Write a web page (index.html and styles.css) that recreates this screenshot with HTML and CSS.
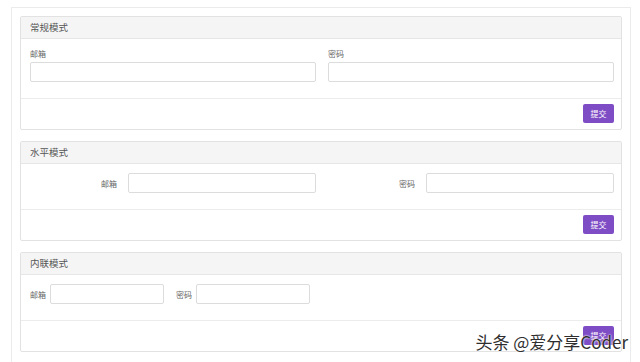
FILE: index.html
```html
<!DOCTYPE html>
<html lang="zh-CN">
<head>
  <meta charset="UTF-8">
  <meta name="viewport" content="width=device-width, initial-scale=1.0">
  <title>表单模式</title>
  <link rel="stylesheet" href="styles.css">
</head>
<body>
  <div class="wrap">
    <!-- 常规模式 -->
    <div class="panel">
      <div class="panel-head">常规模式</div>
      <div class="panel-body grid">
        <div class="field">
          <label>邮箱</label>
          <input type="text">
        </div>
        <div class="field">
          <label>密码</label>
          <input type="password">
        </div>
      </div>
      <div class="panel-foot"><button>提交</button></div>
    </div>

    <!-- 水平模式 -->
    <div class="panel">
      <div class="panel-head">水平模式</div>
      <div class="panel-body grid">
        <div class="field-h">
          <label>邮箱</label>
          <input type="text">
        </div>
        <div class="field-h">
          <label>密码</label>
          <input type="password">
        </div>
      </div>
      <div class="panel-foot"><button>提交</button></div>
    </div>

    <!-- 内联模式 -->
    <div class="panel">
      <div class="panel-head">内联模式</div>
      <div class="panel-body inline">
        <label>邮箱</label>
        <input type="text">
        <label>密码</label>
        <input type="password">
      </div>
      <div class="panel-foot"><button>提交</button></div>
    </div>
  </div>

  <div class="watermark">头条 @爱分享Coder</div>
</body>
</html>
```

FILE: styles.css
```css
body {
  margin: 0;
  background: #fff;
  font-family: "Noto Sans CJK SC", "Noto Sans", sans-serif;
  color: #555;
  overflow: hidden;
}

.wrap {
  margin: 7px 9px 0 11px;
  border: 1px solid #ebebeb;
  padding: 8px 8px 20px 8px;
}

.panel {
  border: 1px solid #e2e2e2;
  border-radius: 2px;
  margin-bottom: 11px;
}

.panel-head {
  background: #f5f5f5;
  border-bottom: 1px solid #e6e6e6;
  height: 21px;
  line-height: 21px;
  padding-left: 9px;
  font-size: 9.5px;
  color: #555;
}

.panel-body {
  padding: 9px 7px 16px 9px;
  border-bottom: 1px solid #ececec;
}

.grid {
  display: grid;
  grid-template-columns: 1fr 1fr;
  column-gap: 12px;
}

label {
  font-size: 8px;
  color: #666;
}

input {
  box-sizing: border-box;
  height: 20px;
  border: 1px solid #dcdcdc;
  border-radius: 2px;
  margin: 0;
  padding: 0 5px;
  background: #fff;
}

.field label {
  display: block;
  line-height: 12px;
  margin-bottom: 2px;
}

.field input {
  display: block;
  width: 100%;
}

.field-h {
  display: grid;
  grid-template-columns: 87px 1fr;
  column-gap: 11px;
  align-items: center;
}

.field-h label {
  text-align: right;
}

.field-h input {
  width: 100%;
}

.inline {
  display: flex;
  align-items: center;
}

.inline label {
  margin-right: 4px;
}

.inline input {
  width: 114px;
  margin-right: 12px;
}

.panel-foot {
  display: flex;
  justify-content: flex-end;
  padding: 5px 7px 6px;
}

button {
  background: #7e4cc5;
  color: #fff;
  border: none;
  border-radius: 2px;
  width: 31px;
  height: 19px;
  font-family: inherit;
  font-size: 8px;
  padding: 0;
}

.watermark {
  position: absolute;
  right: 12px;
  bottom: 8px;
  font-size: 17px;
  color: #2e2e2e;
  text-shadow: 0 0 2px #fff, 0 0 2px #fff;
}
```
